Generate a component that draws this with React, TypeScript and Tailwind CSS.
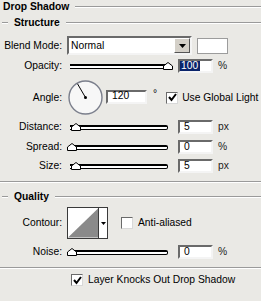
import React from "react";

function Thumb({ left }: { left: number }) {
  return (
    <svg
      width="10"
      height="8"
      viewBox="0 0 10 8"
      className="absolute top-[3px]"
      style={{ left }}
    >
      <polygon
        points="0.5,7.5 0.5,4 5,0.5 9.5,4 9.5,7.5"
        fill="#ffffff"
        stroke="#000000"
        strokeWidth="1"
      />
    </svg>
  );
}

function Input({ value, width = 35, selected = false }: { value: string; width?: number; selected?: boolean }) {
  return (
    <div
      className="h-[14px] bg-white border-2 border-t-[#6a6a6a] border-l-[#6a6a6a] border-r-[#f4f4f4] border-b-[#f4f4f4] flex items-center leading-none"
      style={{ width }}
    >
      {selected ? (
        <span className="bg-[#0a246a] text-white h-full flex items-center pl-[1px] pr-[2px]">{value}</span>
      ) : (
        <span className="pl-[4px]">{value}</span>
      )}
    </div>
  );
}

function Check({ checked }: { checked: boolean }) {
  return (
    <div className="w-[12px] h-[12px] bg-white border border-t-[#6a6a6a] border-l-[#6a6a6a] border-r-[#d8d8d8] border-b-[#d8d8d8] flex items-center justify-center">
      {checked && (
        <svg width="9" height="9" viewBox="0 0 9 9">
          <polyline points="1,4 3.5,7 8,1" fill="none" stroke="#000" strokeWidth="2" />
        </svg>
      )}
    </div>
  );
}

function SliderRow({ label, value, unit, thumb, selected = false }: { label: string; value: string; unit: string; thumb: number; selected?: boolean }) {
  return (
    <div className="flex items-center h-[14px]">
      <div className="w-[62px] text-right">{label}</div>
      <div className="relative ml-[8px] w-[98px] h-[14px] flex items-center">
        <div className="w-full h-[5px] bg-white border-t-2 border-b border-r border-black rounded-r-[2px]" />
        <Thumb left={thumb} />
      </div>
      <div className="ml-[10px]">
        <Input value={value} selected={selected} />
      </div>
      <div className="ml-[5px] text-[#222]">{unit}</div>
    </div>
  );
}

function Etched({ className = "" }: { className?: string }) {
  return <div className={"border-t border-b border-t-[#9a9a9a] border-b-white " + className} />;
}

function Section({ title }: { title: string }) {
  return (
    <div className="flex items-center h-[12px] leading-[12px]">
      <Etched className="ml-[2px] w-[6px]" />
      <div className="font-bold mx-[6px]">{title}</div>
      <Etched className="flex-1" />
    </div>
  );
}

export default function App() {
  return (
    <div
      className="w-[261px] h-[301px] overflow-hidden bg-[#eae9e5] text-black text-[10.3px] leading-[12px] flex flex-col"
      style={{ fontFamily: '"Liberation Sans", Arial, sans-serif' }}
    >
      {/* Title */}
      <div className="mt-[1px] flex items-center h-[12px]">
        <div className="font-bold pl-[3px]">Drop Shadow</div>
        <Etched className="flex-1 ml-[6px]" />
      </div>

      <div className="mt-[4px]">
        <Section title="Structure" />
      </div>

      {/* Blend mode */}
      <div className="mt-[7px] flex items-center h-[19px]">
        <div className="w-[62px] text-right">Blend Mode:</div>
        <div className="ml-[5px] w-[125px] h-[19px] bg-white border-2 border-t-[#6a6a6a] border-l-[#6a6a6a] border-r-[#f4f4f4] border-b-[#f4f4f4] flex items-center">
          <span className="pl-[2px] flex-1">Normal</span>
          <div className="w-[16px] h-full bg-[#d4d0c8] border border-t-white border-l-white border-r-[#555] border-b-[#555] flex items-center justify-center">
            <svg width="7" height="4" viewBox="0 0 7 4">
              <polygon points="0,0 7,0 3.5,4" fill="#000" />
            </svg>
          </div>
        </div>
        <div className="ml-[5px] w-[31px] h-[16px] bg-white border border-[#9c9c9c]" />
      </div>

      <div className="mt-[4px]">
        <SliderRow label="Opacity:" value="100" unit="%" thumb={93} selected />
      </div>

      {/* Angle */}
      <div className="mt-[7px] flex items-center h-[35px]">
        <div className="w-[62px] text-right">Angle:</div>
        <svg width="35" height="35" viewBox="0 0 35 35" className="ml-[6px]">
          <circle cx="17.5" cy="17.5" r="16.5" fill="#f7f7f7" stroke="#7b7f8c" strokeWidth="1.4" />
          <line x1="17.5" y1="17.5" x2="9.5" y2="3.8" stroke="#000" strokeWidth="1" />
          <circle cx="17.5" cy="17.5" r="1.5" fill="#000" />
        </svg>
        <div className="ml-[3px] -mt-[2px]">
          <Input value="120" width={41} />
        </div>
        <div className="ml-[6px] -mt-[8px]">°</div>
        <div className="ml-[9px]">
          <Check checked />
        </div>
        <div className="ml-[4px]">Use Global Light</div>
      </div>

      <div className="mt-[5px]">
        <SliderRow label="Distance:" value="5" unit="px" thumb={1} />
      </div>
      <div className="mt-[6px]">
        <SliderRow label="Spread:" value="0" unit="%" thumb={-3} />
      </div>
      <div className="mt-[5px]">
        <SliderRow label="Size:" value="5" unit="px" thumb={1} />
      </div>

      <Etched className="mt-[8px]" />

      <div className="mt-[8px]">
        <Section title="Quality" />
      </div>

      {/* Contour */}
      <div className="mt-[4px] flex items-center h-[32px]">
        <div className="w-[62px] text-right">Contour:</div>
        <div className="ml-[5px] w-[41px] h-[32px] bg-white border border-[#3a3a3a] flex">
          <svg width="31" height="30" viewBox="0 0 31 30" className="border-r border-[#3a3a3a]">
            <polygon points="0,30 31,0 31,30" fill="#8a8a8a" />
          </svg>
          <div className="flex-1 flex items-center justify-center">
            <svg width="5" height="3" viewBox="0 0 5 3">
              <polygon points="0,0 5,0 2.5,3" fill="#000" />
            </svg>
          </div>
        </div>
        <div className="ml-[13px]">
          <Check checked={false} />
        </div>
        <div className="ml-[5px]">Anti-aliased</div>
      </div>

      <div className="mt-[6px]">
        <SliderRow label="Noise:" value="0" unit="%" thumb={-3} />
      </div>

      <Etched className="mt-[8px]" />

      <div className="mt-[5px] flex items-center h-[12px] pl-[71px]">
        <Check checked />
        <div className="ml-[5px]">Layer Knocks Out Drop Shadow</div>
      </div>
    </div>
  );
}
